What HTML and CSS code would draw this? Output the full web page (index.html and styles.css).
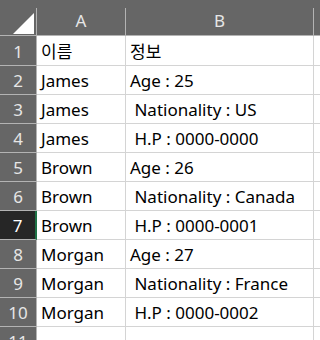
FILE: index.html
```html
<!DOCTYPE html>
<html>
<head>
	<meta http-equiv="Content-Type" content="text/html;charset=UTF-8">
	<title>시트</title>
	<link rel="stylesheet" href="styles.css">
</head>
<body>
	<div class="sheet">
		<div class="head">
			<div class="corner"><svg width="21" height="21" viewBox="0 0 21 21"><polygon points="21,0 21,21 0,21" fill="#fff"/></svg></div>
			<div class="col">A</div>
			<div class="col">B</div>
			<div class="col last"></div>
		</div>
		<div class="row first"><div class="num">1</div><div class="cell">이름</div><div class="cell">정보</div><div class="cell"></div></div>
		<div class="row"><div class="num">2</div><div class="cell">James</div><div class="cell">Age : 25</div><div class="cell"></div></div>
		<div class="row"><div class="num">3</div><div class="cell">James</div><div class="cell"> Nationality : US</div><div class="cell"></div></div>
		<div class="row"><div class="num">4</div><div class="cell">James</div><div class="cell"> H.P : 0000-0000</div><div class="cell"></div></div>
		<div class="row"><div class="num">5</div><div class="cell">Brown</div><div class="cell">Age : 26</div><div class="cell"></div></div>
		<div class="row"><div class="num">6</div><div class="cell">Brown</div><div class="cell"> Nationality : Canada</div><div class="cell"></div></div>
		<div class="row"><div class="num active">7</div><div class="cell">Brown</div><div class="cell"> H.P : 0000-0001</div><div class="cell"></div></div>
		<div class="row"><div class="num">8</div><div class="cell">Morgan</div><div class="cell">Age : 27</div><div class="cell"></div></div>
		<div class="row"><div class="num">9</div><div class="cell">Morgan</div><div class="cell"> Nationality : France</div><div class="cell"></div></div>
		<div class="row"><div class="num">10</div><div class="cell">Morgan</div><div class="cell"> H.P : 0000-0002</div><div class="cell"></div></div>
		<div class="row"><div class="num">11</div><div class="cell"></div><div class="cell"></div><div class="cell"></div></div>
	</div>
</body>
</html>
```

FILE: styles.css
```css
*{ margin: 0; padding: 0; box-sizing: border-box; }
body{ width: 320px; height: 340px; overflow: hidden; background: #fff; font-family: "Noto Sans", "Noto Sans CJK KR", sans-serif; font-size: 17px; }
.sheet{ width: 320px; }
.head, .row{ display: grid; grid-template-columns: 37px 89px 188px 1fr; }
.head{ background: #666; padding-top: 8px; height: 36px; border-bottom: 1px solid #b3b3b3; }
.corner, .col{ border-right: 1px solid #b3b3b3; }
.corner{ display: flex; justify-content: flex-end; align-items: flex-end; padding: 0 2px 1px 0; }
.corner svg{ display: block; }
.col{ color: #e6e6e6; text-align: center; line-height: 25px; }
.col.last{ border-right: none; }
.row{ height: 29px; }
.row.first{ height: 30px; }
.num{ background: #666; color: #e6e6e6; text-align: center; border-right: 1px solid #b3b3b3; border-bottom: 1px solid #b3b3b3; display: flex; align-items: flex-end; justify-content: center; padding-bottom: 2px; line-height: 22px; }
.num.active{ background: #262626; color: #fff; border-right: 2px solid #1e7145; }
.cell{ border-right: 1px solid #d4d4d4; border-bottom: 1px solid #d4d4d4; color: #000; white-space: pre; padding: 0 0 2px 4px; line-height: 22px; display: flex; align-items: flex-end; overflow: hidden; }
.cell:last-child{ border-right: none; }
```
